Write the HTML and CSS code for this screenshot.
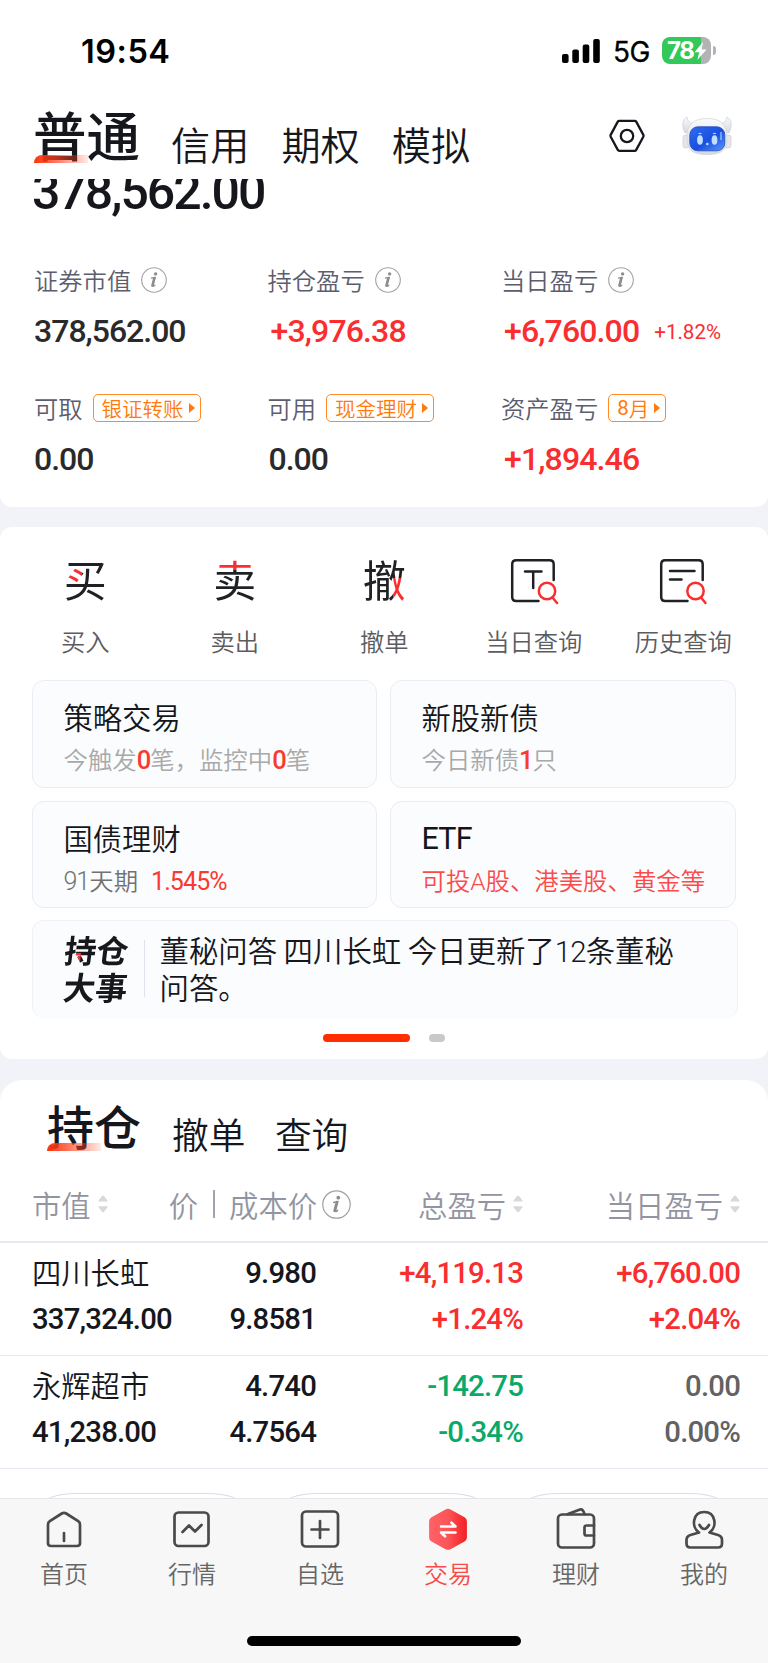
FILE: index.html
```html
<!DOCTYPE html>
<html lang="zh-CN">
<head>
<meta charset="utf-8">
<title>交易</title>
<link rel="stylesheet" href="styles.css">
</head>
<body>
<svg class="defs" width="0" height="0" aria-hidden="true">
  <defs>
    <linearGradient id="tradeFill" x1="0" y1="0" x2="1" y2="0"><stop offset="0" stop-color="#ff6266"/><stop offset=".5" stop-color="#fb5558"/><stop offset="1" stop-color="#f41f22"/></linearGradient>
    <linearGradient id="face" x1="0" y1="0" x2="1" y2="1"><stop offset="0" stop-color="#2f6df0"/><stop offset=".55" stop-color="#1a4fe0"/><stop offset="1" stop-color="#5a9bff"/></linearGradient>
    <linearGradient id="shell" x1="0" y1="0" x2="0" y2="1"><stop offset="0" stop-color="#fafbfd"/><stop offset="1" stop-color="#d5d8e0"/></linearGradient>
    <symbol id="info" viewBox="0 0 26 26"><circle cx="13" cy="13" r="12.3" fill="none" stroke="#a3a3a3" stroke-width="1.1"/><circle cx="14.6" cy="6.9" r="1.7" fill="#8c8c8c"/><path d="M10 11.2l4.3-.8-2.2 8.2q-.2 1 .6.7 1-.5 1.6-1.5" fill="none" stroke="#8c8c8c" stroke-width="1.2"/><path d="M13.3 10.8l-2.1 7.9" stroke="#8c8c8c" stroke-width="2.2" stroke-linecap="round"/></symbol>
    <symbol id="sort" viewBox="0 0 10 18"><path d="M1 6.600Q-.3 6.600.7 5.200L4 1Q5 0 6 1l3.300 4.200q1 1.400-.3 1.400zM1 11.200Q-.3 11.200.7 12.600L4 16.800q1 1 2 0l3.300-4.200q1-1.400-.3-1.400z" fill="#d9d9d9"/></symbol>
  </defs>
</svg>
<div class="screen">
  <main class="content">
    <header class="top">
      <div class="status">
        <span class="clock">19:54</span>
        <svg class="signal" width="40" height="25" viewBox="0 0 40 25"><rect x="1" y="15" width="6.6" height="9" rx="2"/><rect x="11.3" y="10.5" width="6.6" height="13.5" rx="2"/><rect x="21.7" y="5.5" width="6.6" height="18.5" rx="2"/><rect x="32.2" y="0" width="6.6" height="24" rx="2"/></svg>
        <span class="net">5G</span>
        <div class="battery"><span class="level">78</span><svg width="13" height="18" viewBox="0 0 13 18"><path d="M9 0L.5 10.3h4.7L3.4 18 12.5 7.4H7.6z" fill="#fff"/></svg><i class="tip"></i></div>
      </div>
      <nav class="accounts">
        <span class="acct current">普通</span>
        <span class="acct">信用</span>
        <span class="acct">期权</span>
        <span class="acct">模拟</span>
        <svg class="hex" width="36" height="34" viewBox="0 0 36 34" fill="none" stroke="#16171c" stroke-width="2.3" stroke-linejoin="round"><path d="M10.3 1.8h15.4q1 0 1.5.8l7 13q.6 1.2 0 2.4l-7 12.9q-.5.9-1.5.9H10.300q-1 0-1.5-.9L1.800 18q-.6-1.200 0-2.400l7-13q.5-.8 1.500-.8z"/><circle cx="18" cy="17" r="6.200"/></svg>
        <svg class="robot" width="50" height="42" viewBox="0 0 50 42">
          <path d="M3 18C-1 10 1 4 5 2c1 5 3 6 7 7L8 16zM47 18c4-8 2-14-2-16-1 5-3 6-7 7l4 7z" fill="url(#shell)" stroke="#c9cdd6" stroke-width=".7"/>
          <rect x="1" y="20" width="6" height="13" rx="2.500" fill="#e9e6ea" stroke="#cbc5cb" stroke-width=".6"/><rect x="43" y="20" width="6" height="13" rx="2.500" fill="#e9e6ea" stroke="#cbc5cb" stroke-width=".6"/>
          <path d="M25 3.500C12 3.500 5 9 5 22s5 17.500 20 17.500S45 35 45 22 38 3.500 25 3.500z" fill="url(#shell)" stroke="#cfd2da" stroke-width=".7"/>
          <rect x="7.800" y="11.800" width="35" height="24" rx="8" fill="url(#face)" stroke="#1f49c0" stroke-width=".8"/>
          <ellipse cx="18" cy="25" rx="2.900" ry="4.800" fill="#bfe0ff"/><ellipse cx="32.500" cy="25" rx="2.900" ry="4.800" fill="#bfe0ff"/>
          <path d="M16.500 18.800q1.500-1 3 0M31 18.800q1.500-1 3 0M39 17v8" stroke="#a9ccff" stroke-width="1.200" fill="none"/><circle cx="25.300" cy="29" r="1.300" fill="#bfe0ff"/>
        </svg>
      </nav>
    </header>

    <section class="card assets">
      <div class="total num">378,562.00</div>
      <div class="stats">
        <div class="stat"><div class="label">证券市值<svg class="info"><use href="#info"/></svg></div><div class="value num">378,562.00</div></div>
        <div class="stat"><div class="label">持仓盈亏<svg class="info"><use href="#info"/></svg></div><div class="value num up signed">+3,976.38</div></div>
        <div class="stat"><div class="label">当日盈亏<svg class="info"><use href="#info"/></svg></div><div class="value num up signed">+6,760.00<small>+1.82%</small></div></div>
        <div class="stat"><div class="label">可取<span class="tag">银证转账<i class="arrow"></i></span></div><div class="value num">0.00</div></div>
        <div class="stat"><div class="label">可用<span class="tag">现金理财<i class="arrow"></i></span></div><div class="value num shifted">0.00</div></div>
        <div class="stat"><div class="label">资产盈亏<span class="tag"><b>8</b>月<i class="arrow"></i></span></div><div class="value num up signed">+1,894.46</div></div>
      </div>
    </section>

    <section class="card trade">
      <div class="actions">
        <div class="action"><span class="glyph buy">买</span><span class="name">买入</span></div>
        <div class="action"><span class="glyph sell">卖</span><span class="name">卖出</span></div>
        <div class="action"><span class="glyph cancel">撤</span><span class="name">撤单</span></div>
        <div class="action"><svg class="pic" width="48" height="46" viewBox="0 0 48 46" fill="none" stroke="#202124" stroke-width="2.500" stroke-linecap="round"><path d="M28.500 43H6.200q-4 0-4-4V6.200q0-4 4-4H39.700q4 0 4 4V22"/><path d="M15 13.500h16.500M23.200 13.500V30"/><g stroke="#fa2d2f"><circle cx="37" cy="33" r="8.200"/><path d="M42.500 39.500l4.500 5.500"/></g></svg><span class="name">当日查询</span></div>
        <div class="action"><svg class="pic" width="48" height="46" viewBox="0 0 48 46" fill="none" stroke="#202124" stroke-width="2.500" stroke-linecap="round"><path d="M28.500 43H6.200q-4 0-4-4V6.200q0-4 4-4H39.700q4 0 4 4V22"/><path d="M11 13h24.500M11 21.500h11.500"/><g stroke="#fa2d2f"><circle cx="36.500" cy="33" r="8.200"/><path d="M42 39.500l4.500 5.500"/></g></svg><span class="name">历史查询</span></div>
      </div>
      <div class="tiles">
        <div class="tile"><h3>策略交易</h3><p>今触发<b>0</b>笔，监控中<b>0</b>笔</p></div>
        <div class="tile"><h3>新股新债</h3><p>今日新债<b>1</b>只</p></div>
        <div class="tile"><h3>国债理财</h3><p class="dark"><span class="days">91</span>天期<span class="rate">1.545%</span></p></div>
        <div class="tile"><h3 class="latin">ETF</h3><p class="hot">可投<span class="a">A</span>股、港美股、黄金等</p></div>
      </div>
      <div class="news">
        <div class="brand"><span>持仓</span><span>大事</span></div>
        <p>董秘问答 四川长虹 今日更新了<span class="n12">12</span>条董秘<br>问答。</p>
      </div>
      <div class="pager"><i class="on"></i><i></i></div>
    </section>

    <section class="card holdings">
      <nav class="tabs"><span class="tab current">持仓</span><span class="tab">撤单</span><span class="tab">查询</span></nav>
      <div class="row head">
        <span class="c1">市值<svg class="sort"><use href="#sort"/></svg></span>
        <span class="c2">价<i class="bar"></i>成本价<svg class="info"><use href="#info"/></svg></span>
        <span class="c3">总盈亏<svg class="sort"><use href="#sort"/></svg></span>
        <span class="c4">当日盈亏<svg class="sort"><use href="#sort"/></svg></span>
      </div>
      <div class="row stock">
        <div class="c1"><span class="cn">四川长虹</span><span class="num">337,324.00</span></div>
        <div class="c2 num"><span>9.980</span><span>9.8581</span></div>
        <div class="c3 num up"><span>+4,119.13</span><span>+1.24%</span></div>
        <div class="c4 num up"><span>+6,760.00</span><span>+2.04%</span></div>
      </div>
      <div class="row stock">
        <div class="c1"><span class="cn">永辉超市</span><span class="num">41,238.00</span></div>
        <div class="c2 num"><span>4.740</span><span>4.7564</span></div>
        <div class="c3 num down"><span>-142.75</span><span>-0.34%</span></div>
        <div class="c4 num flat"><span>0.00</span><span>0.00%</span></div>
      </div>
      <div class="pills"><i></i><i></i><i></i></div>
    </section>
  </main>

  <footer class="tabbar">
    <nav class="menu">
      <div class="item"><svg width="42" height="42" viewBox="0 0 42 42"><path d="M5 16.500q0-2.200 1.800-3.300L18.800 5.500q2.200-1.300 4.400 0l12 7.700Q37 14.300 37 16.500V35q0 3-3 3H8q-3 0-3-3z"/><path d="M21 25v8"/></svg><span>首页</span></div>
      <div class="item"><svg width="42" height="42" viewBox="0 0 42 42"><rect x="3.500" y="4.500" width="34" height="33.500" rx="4"/><path d="M11.500 24l6.500-6.500 6 6 6.500-6.500"/></svg><span>行情</span></div>
      <div class="item"><svg width="42" height="42" viewBox="0 0 42 42"><rect x="3" y="3.500" width="36" height="35" rx="4"/><path d="M12.500 21.500h17M21 13v17"/></svg><span>自选</span></div>
      <div class="item active"><svg width="42" height="42" viewBox="0 0 42 42"><path d="M18.500 1.500q2.500-1.300 5 0l14 7.700q2.400 1.300 2.400 4v16.200q0 2.700-2.400 4l-14 7.800q-2.500 1.300-5 0l-14-7.800q-2.400-1.300-2.400-4V13.200q0-2.700 2.400-4z" fill="url(#tradeFill)" stroke="none"/><path d="M14 18.500h14.500l-4-3.800M28.500 24.500H14l4 3.800" stroke="#fff" stroke-width="2.600"/></svg><span>交易</span></div>
      <div class="item"><svg width="42" height="42" viewBox="0 0 42 42"><rect x="3" y="6.500" width="36" height="33" rx="4"/><path d="M13 6l12-4.500q3-.8 4.500 4.500M39 17.500h-7.500q-2 0-2 2v6q0 2 2 2H39"/></svg><span>理财</span></div>
      <div class="item"><svg width="42" height="42" viewBox="0 0 42 42"><path d="M16 24.500C8 19 9.500 4 21.200 4S34.500 19 26.500 24.500L35 27q4 1.200 4 5v3.500q0 4-4 4H7.500q-4 0-4-4V32q0-3.800 4-5z"/><path d="M16.500 17q4.700 8 9.500 0"/></svg><span>我的</span></div>
    </nav>
    <i class="homebar"></i>
  </footer>
</div>
</body>
</html>
```
FILE: styles.css
```css
* { box-sizing: border-box; margin: 0; padding: 0; }
body { width: 768px; background: #f2f3f8; font-family: "Noto Sans CJK SC", sans-serif; color: #16171c; }
i, b, small { font-style: normal; font-weight: inherit; }
.defs { display: block; }
.screen { width: 768px; height: 1663px; overflow: hidden; display: flex; flex-direction: column; }
.content { height: 1498px; flex: none; overflow: hidden; }
.num { font-family: Roboto, sans-serif; font-weight: 500; white-space: nowrap; }
.up { color: #fa2d2f; }
.down { color: #09aa68; }
.flat { color: #626262; }
.info { width: 26px; height: 26px; flex: none; }
.sort { width: 10px; height: 18px; flex: none; }

/* status bar and account switcher */
.top { height: 179px; background: #fff; }
.status { height: 103px; padding: 30px 51px 0 81px; display: flex; align-items: flex-start; color: #000; }
.clock { font: 600 32.500px/44px Inter, sans-serif; letter-spacing: .5px; flex: 1; }
.signal { margin: 9px 12px 0 0; }
.net { font: 400 28px/44px Inter, sans-serif; width: 49px; letter-spacing: -.6px; -webkit-text-stroke: .3px #000; }
.battery { position: relative; width: 49px; height: 27px; margin: 7px 6px 0 0; padding-left: 5px; border-radius: 8px; background: linear-gradient(90deg, #34c759 0 39px, #b3b3b6 39px); display: flex; align-items: center; color: #fff; }
.level { font: 700 24px/27px Inter, sans-serif; letter-spacing: -1.300px; }
.tip { position: absolute; left: 51px; top: 9px; width: 3px; height: 9px; border-radius: 0 3px 3px 0; background: #b3b3b6; }
.accounts { height: 76px; padding: 0 36px 0 33px; display: flex; align-items: flex-start; }
.acct { font-size: 39.200px; line-height: 50px; margin: 15px 32px 0 0; font-weight: 350; }
.acct.current { font-size: 53.500px; line-height: 62px; font-weight: 500; margin: 0 31px 0 0; }
.current { position: relative; }
.current::after { content: ""; position: absolute; left: 1px; bottom: 2px; width: 54px; height: 8px; border-radius: 8px 0 0 0; background: linear-gradient(90deg, #fe3109, rgba(255, 64, 30, .72) 40%, rgba(255, 90, 60, .12)); }
.hex { margin: 16px 37px 0 auto; }
.robot { margin-top: 12px; }

.card { background: #fff; overflow: hidden; }

/* assets */
.assets { height: 328px; padding-left: 34px; border-radius: 0 0 12px 12px; }
.total { margin: -11px 0 0 -2px; height: 48px; line-height: 48px; font-size: 50px; letter-spacing: -2px; }
.stats { margin-top: 47px; display: grid; grid-template-columns: 233.500px 233.500px 1fr; grid-auto-rows: 127.500px; }
.label { height: 34px; line-height: 34px; font-size: 24.300px; font-weight: 350; color: #5c5d6e; display: flex; align-items: center; }
.label .info { margin-left: 10px; }
.value { margin-top: 14px; height: 40px; line-height: 40px; font-size: 32px; letter-spacing: -1px; color: #2a2a2b; }
.value.up { color: #fa2d2f; letter-spacing: -.85px; }
.value.signed { padding-left: 3px; }
.value.shifted { padding-left: 1px; }
.value small { font-size: 20.500px; margin-left: 15px; letter-spacing: 0; font-weight: 400; vertical-align: 3px; }
.tag { margin-left: 10px; height: 28px; padding: 0 5px 0 8px; border: 1.500px solid #ff8a26; border-radius: 5px; color: #ff7a0c; font-size: 20.500px; display: flex; align-items: center; }
.tag b { font-family: Roboto, sans-serif; font-weight: 400; }
.arrow { margin-left: 5px; border-left: 6.500px solid #ff7a0c; border-top: 5.500px solid transparent; border-bottom: 5.500px solid transparent; }

/* trade shortcuts */
.trade { margin-top: 20px; height: 531.500px; padding-top: 31px; border-radius: 12px; }
.actions { display: grid; grid-template-columns: repeat(5, 149.500px); padding-left: 10.500px; }
.action { display: flex; flex-direction: column; align-items: center; }
.glyph { width: 44px; height: 46px; text-align: center; font-size: 43px; line-height: 41px; font-weight: 400; color: transparent; background-color: #202124; background-repeat: no-repeat; -webkit-background-clip: text; background-clip: text; }
.buy { background-image: linear-gradient(#fa2d2f, #fa2d2f); background-size: 18px 15px; background-position: 1px 10px; }
.sell { background-image: linear-gradient(#fa2d2f, #fa2d2f); background-size: 44px 12px; background-position: 0 0; }
.cancel { background-image: linear-gradient(#fa2d2f, #fa2d2f); background-size: 13px 28px; background-position: 31px 20px; }
.pic { overflow: visible; }
.name { margin-top: 20px; font-size: 24.300px; line-height: 34px; font-weight: 350; color: #5c5c5f; }
.tiles { margin: 22px 32px 0; display: grid; grid-template-columns: 345px 345.500px; gap: 13px; grid-auto-rows: 107.500px; }
.tile { padding: 13px 0 0 30.500px; border: 1.500px solid #ebecf3; border-radius: 12px; background: #fbfcfe; white-space: nowrap; }
.tile h3 { height: 45px; font-size: 29.300px; line-height: 44px; font-weight: 350; color: #151619; }
.tile h3.latin { font-family: Roboto, sans-serif; font-size: 30.500px; font-weight: 400; letter-spacing: -.8px; line-height: 48px; }
.tile p { font-size: 24.400px; line-height: 40px; font-weight: 350; color: #a9a9a9; }
.tile p.dark { color: #727272; }
.tile p.hot { color: #fb4a4a; }
.tile b { font-family: Roboto, sans-serif; font-size: 25.500px; line-height: 1; font-weight: 500; color: #f93a2e; letter-spacing: -1px; }
.days { font-family: Roboto, sans-serif; line-height: 1; font-size: 25px; letter-spacing: -1px; }
.rate { font-family: Roboto, sans-serif; line-height: 1; font-size: 25px; font-weight: 400; color: #f93a2e; margin-left: 13px; letter-spacing: -.9px; }
.a { font-family: Roboto, sans-serif; line-height: 1; }
.news { margin: 12px 30px 0 32px; height: 98px; padding: 10px 0 0 30px; border: 1.500px solid #f0f1f6; border-bottom: 0; border-radius: 12px; background: #fbfcfe; display: flex; }
.brand { width: 81.500px; height: 57px; margin-top: 9px; margin-right: 15px; border-right: 1.500px solid #dfe0f0; }
.brand span { display: block; margin-top: -9px; height: 46px; font-size: 32px; line-height: 37px; font-weight: 700; transform: skewX(-7deg); transform-origin: 0 50%; padding-left: 1px; color: transparent; background: linear-gradient(#fa2d2f, #fa2d2f) 13px 22px / 5px 8px no-repeat, #17181b; -webkit-background-clip: text; background-clip: text; }
.brand span + span { background: #17181b; -webkit-background-clip: text; background-clip: text; padding-left: 0; }
.news p { font-size: 29.400px; line-height: 37px; font-weight: 350; white-space: nowrap; }
.n12 { font-family: Roboto, sans-serif; letter-spacing: -.8px; line-height: 1; }
.pager { display: flex; gap: 19.500px; margin: 15.500px 0 0 323px; }
.pager i { width: 16px; height: 8.500px; border-radius: 4.500px; background: #c9c9cb; }
.pager .on { width: 86.500px; background: #ff2d00; }

/* holdings */
.holdings { margin-top: 21.500px; height: 440px; border-radius: 22px 22px 0 0; }
.tabs { height: 92px; padding-left: 47px; display: flex; align-items: flex-start; }
.tab { font-size: 36.700px; line-height: 50px; margin: 28px 29.500px 0 0; font-weight: 350; }
.tab.current { font-size: 47px; line-height: 56px; font-weight: 500; margin: 17px 31px 0 0; }
.tab.current::after { left: 0; bottom: 2px; }
.row { display: grid; grid-template-columns: 168px 183px 172px 217px; padding-right: 28px; }
.head { height: 71px; border-bottom: 2px solid #e8e8f3; font-size: 29.300px; line-height: 60px; font-weight: 350; color: #9394a1; white-space: nowrap; }
.head span { display: flex; align-items: center; height: 64px; justify-content: flex-end; }
.head .sort { margin-left: 7px; }
.head .info { width: 29px; height: 29px; margin-left: 5px; }
.head .c1, .stock .c1 { justify-content: flex-start; padding-left: 32px; }
.bar { flex: none; width: 2px; height: 28px; margin: 0 14.500px; background: #a2a3ae; }
.stock { height: 113px; padding-top: 8px; border-bottom: 1.500px solid #e8e8f3; font-size: 29.300px; letter-spacing: -.8px; }
.stock span { display: block; height: 45.500px; line-height: 44px; white-space: nowrap; }
.stock .cn { font-weight: 350; letter-spacing: 0; line-height: 41px; }
.stock .c2 { text-align: right; padding-right: 35px; }
.stock .c3, .stock .c4 { text-align: right; }
.pills { display: flex; gap: 37px; padding: 24px 0 0 40px; }
.pills i { width: 204px; height: 60px; border: 1.500px solid #dcdcea; border-radius: 36px / 14px; }

/* bottom navigation */
.tabbar { height: 165px; flex: none; background: #f7f7f7; border-top: 1px solid #e6e6ea; }
.menu { display: grid; grid-template-columns: repeat(6, 128px); height: 137px; }
.item { display: flex; flex-direction: column; align-items: center; padding-top: 9px; color: #666; font-size: 24px; font-weight: 350; }
.item svg { fill: none; stroke: #4a4a4a; stroke-width: 2.700; stroke-linecap: round; stroke-linejoin: round; }
.item span { margin-top: 6px; line-height: 34px; }
.item.active { color: #f84a49; }
.homebar { display: block; width: 274px; height: 10px; margin: 0 auto; border-radius: 5px; background: #000; }
```
